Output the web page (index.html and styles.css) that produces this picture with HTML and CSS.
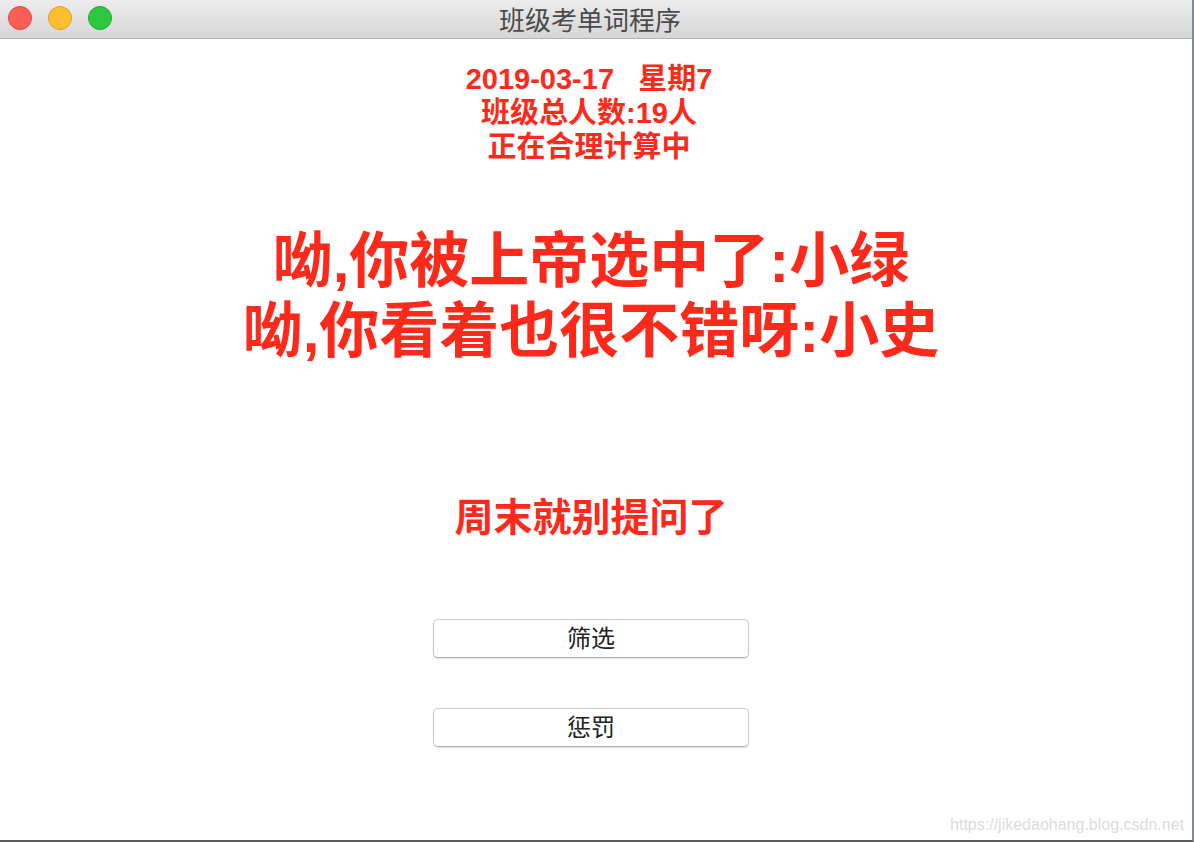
FILE: index.html
```html
<!DOCTYPE html>
<html lang="zh-CN">

<head>
    <meta charset="UTF-8">
    <meta name="viewport" content="width=device-width, initial-scale=1.0">
    <title>班级考单词程序</title>
    <link rel="stylesheet" href="styles.css">
</head>

<body>
    <div class="window">
        <div class="titlebar">
            <div class="lights">
                <span class="light red"></span>
                <span class="light yellow"></span>
                <span class="light green"></span>
            </div>
            <div class="title">班级考单词程序</div>
        </div>
        <div class="content">
            <div class="info">
                <div>2019-03-17&nbsp;&nbsp;&nbsp;星期7</div>
                <div>班级总人数:19人</div>
                <div>正在合理计算中</div>
            </div>
            <div class="picked">
                <div>呦,你被上帝选中了:小绿</div>
                <div>呦,你看着也很不错呀:小史</div>
            </div>
            <div class="notice">周末就别提问了</div>
            <button class="btn">筛选</button>
            <button class="btn">惩罚</button>
            <div class="watermark">https://jikedaohang.blog.csdn.net</div>
        </div>
    </div>
</body>

</html>
```

FILE: styles.css
```css
body {
    margin: 0;
    padding: 0;
    background-color: #8a8a8a;
    font-family: "Liberation Sans", "Noto Sans CJK SC", sans-serif;
}

.window {
    width: 1192px;
    height: 840px;
    background-color: #fff;
    border-right: 2px solid #7f8a96;
    border-bottom: 2px solid #5a5a5a;
    display: flex;
    flex-direction: column;
}

.titlebar {
    height: 38px;
    flex: none;
    background: linear-gradient(#ececec, #d6d6d6);
    border-bottom: 1px solid #b4b4b4;
    display: flex;
    align-items: center;
    position: relative;
}

.lights {
    display: flex;
    gap: 16px;
    padding-left: 8px;
    margin-top: -2px;
}

.light {
    width: 22px;
    height: 22px;
    border-radius: 50%;
    border: 1px solid rgba(0, 0, 0, 0.15);
}

.red {
    background-color: #fd5f57;
    border-color: #e0443e;
}

.yellow {
    background-color: #febd2f;
    border-color: #dea123;
}

.green {
    background-color: #2dc840;
    border-color: #1aab29;
}

.title {
    position: absolute;
    left: 0;
    right: 12px;
    top: 0;
    line-height: 37px;
    text-align: center;
    font-family: "Noto Sans CJK SC", sans-serif;
    font-size: 26px;
    color: #4a4a4a;
}

.content {
    flex: 1;
    display: flex;
    flex-direction: column;
    align-items: center;
    padding-right: 10px;
    color: #fd2a1b;
    font-weight: bold;
    position: relative;
}

.info {
    margin-top: 23px;
    margin-right: 4px;
    font-size: 29px;
    line-height: 34px;
    text-align: center;
}

.picked {
    margin-top: 63px;
    font-size: 60px;
    line-height: 70px;
    text-align: center;
}

.notice {
    margin-top: 126px;
    font-size: 39px;
    line-height: 50px;
}

.btn {
    width: 316px;
    height: 39px;
    margin-top: 76px;
    background-color: #fff;
    border: 1px solid #c9c9c9;
    border-bottom-color: #b0b0b0;
    border-radius: 5px;
    box-shadow: 0 1px 1px rgba(0, 0, 0, 0.12);
    font-family: "Noto Sans CJK SC", sans-serif;
    font-size: 24px;
    color: #222;
    padding: 0 0 4px;
    line-height: 32px;
}

.btn + .btn {
    margin-top: 50px;
}

.watermark {
    position: absolute;
    right: 8px;
    bottom: 6px;
    font-size: 16px;
    font-weight: normal;
    color: #dcdcdc;
}
```
